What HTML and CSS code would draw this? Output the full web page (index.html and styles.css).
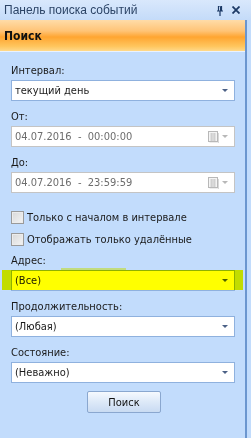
FILE: index.html
```html
<!DOCTYPE html>
<html lang="ru">
<head>
<meta charset="utf-8">
<link rel="stylesheet" href="styles.css">
</head>
<body>
<div class="window">
  <div class="titlebar">
    <span class="title">Панель поиска событий</span>
    <span class="tb-icons">
      <svg class="pin" width="8" height="10" viewBox="0 0 8 10"><path d="M2 0h4M2.5 0v5M5.5 0v5M1 5h6M4 5v5" stroke="#1d3a66" stroke-width="1.2" fill="none"/><rect x="4" y="0.5" width="1.5" height="4.5" fill="#1d3a66"/></svg>
      <svg class="close" width="8" height="8" viewBox="0 0 8 8"><path d="M0.5 0.5L7.5 7.5M7.5 0.5L0.5 7.5" stroke="#1d3a66" stroke-width="1.8"/></svg>
    </span>
  </div>
  <div class="panel">
    <div class="header">Поиск</div>
    <div class="content">
      <div class="group">
        <div class="label">Интервал:</div>
        <div class="field select"><span>текущий день</span><i class="arrow"></i></div>
      </div>
      <div class="group">
        <div class="label">От:</div>
        <div class="field date"><span>04.07.2016&nbsp; - &nbsp;00:00:00</span>
          <svg class="cal" width="11" height="12" viewBox="0 0 11 12"><rect x="0.5" y="0.5" width="9" height="10" fill="#f4f4f4" stroke="#b8b8b8"/><path d="M2 3h6M2 5h6M2 7h6M2 9h6M3.5 2v8M5 2v8M6.5 2v8" stroke="#d0d0d0" stroke-width="1"/><path d="M10.5 2v10H1.5" stroke="#d8d8d8" fill="none"/></svg>
          <i class="arrow grey"></i></div>
      </div>
      <div class="group">
        <div class="label">До:</div>
        <div class="field date"><span>04.07.2016&nbsp; - &nbsp;23:59:59</span>
          <svg class="cal" width="11" height="12" viewBox="0 0 11 12"><rect x="0.5" y="0.5" width="9" height="10" fill="#f4f4f4" stroke="#b8b8b8"/><path d="M2 3h6M2 5h6M2 7h6M2 9h6M3.5 2v8M5 2v8M6.5 2v8" stroke="#d0d0d0" stroke-width="1"/><path d="M10.5 2v10H1.5" stroke="#d8d8d8" fill="none"/></svg>
          <i class="arrow grey"></i></div>
      </div>
      <div class="checks">
        <label class="check"><span class="box"></span>Только с началом в интервале</label>
        <label class="check"><span class="box"></span>Отображать только удалённые</label>
      </div>
      <div class="group hl-group">
        <div class="label">Адрес:</div>
        <div class="field select"><span>(Все)</span><i class="arrow"></i></div>
        <div class="highlight"></div>
        <div class="highlight hl-top"></div>
      </div>
      <div class="group">
        <div class="label">Продолжительность:</div>
        <div class="field select"><span>(Любая)</span><i class="arrow"></i></div>
      </div>
      <div class="group">
        <div class="label">Состояние:</div>
        <div class="field select"><span>(Неважно)</span><i class="arrow"></i></div>
      </div>
      <div class="btn-row"><button class="btn">Поиск</button></div>
    </div>
  </div>
</div>
</body>
</html>
```
FILE: styles.css
```css
* { box-sizing: border-box; }
html, body { margin: 0; padding: 0; }
body {
  width: 251px;
  height: 438px;
  background: #c2dcfc;
  font-family: "DejaVu Sans Condensed", "DejaVu Sans", sans-serif;
  font-size: 11px;
  color: #1a1a1a;
  overflow: hidden;
}
.window { display: flex; flex-direction: column; height: 438px; }
.titlebar {
  height: 20px;
  display: flex;
  align-items: center;
  justify-content: space-between;
  padding: 0 11px 0 4px;
  background: linear-gradient(#d9e8fc, #c4dbf9);
  color: #2c4466;
  font-family: "Liberation Sans", Arial, sans-serif;
  font-size: 12px;
}
.tb-icons { display: flex; align-items: center; gap: 8px; }
.pin { margin-top: 1px; }
.panel {
  flex: 1;
  width: 247px;
  border-right: 2px solid #6b96cf;
  display: flex;
  flex-direction: column;
}
.header {
  height: 32px;
  display: flex;
  align-items: center;
  padding-left: 4px;
  font-weight: bold;
  font-size: 12px;
  color: #111;
  background: linear-gradient(#ffdca8 0%, #ffc477 35%, #ffa531 55%, #ffc65e 85%, #ffd98a 100%);
  border-bottom: 1px solid #e9f2ff;
}
.content {
  padding: 11px 0 0 11px;
  display: flex;
  flex-direction: column;
}
.group { display: flex; flex-direction: column; margin-bottom: 8px; position: relative; }
.label { height: 15px; line-height: 15px; margin-bottom: 2px; color: #1a1a1a; }
.field {
  width: 224px;
  height: 21px;
  background: #fff;
  border: 1px solid #8fb1de;
  display: flex;
  align-items: center;
  padding-left: 3px;
  position: relative;
}
.field span { flex: 1; white-space: nowrap; }
.arrow {
  width: 0; height: 0;
  border-left: 3px solid transparent;
  border-right: 3px solid transparent;
  border-top: 3px solid #4c6186;
  margin-right: 6px;
}
.arrow.grey { border-top-color: #b8b8b8; margin-left: 3px; }
.date { border-color: #c4c4c4; color: #6d6d6d; }
.cal { display: block; }
.checks { display: flex; flex-direction: column; gap: 6px; margin: 8px 0 6px; }
.check { display: flex; align-items: center; height: 16px; gap: 3px; }
.box {
  width: 13px; height: 13px;
  border: 1px solid #9a9a9a;
  background: linear-gradient(135deg, #d8d8d8, #f4f4f4);
  box-shadow: inset 0 0 0 1px #ececec;
}
.highlight {
  position: absolute;
  left: -9px;
  top: 17px;
  width: 241px;
  height: 20px;
  background: #ffff00;
  mix-blend-mode: multiply;
}
.hl-top { left: 50px; top: 15px; width: 65px; height: 3px; opacity: 0.5; }
.btn-row { display: flex; padding-left: 76px; }
.btn {
  width: 74px;
  height: 22px;
  border: 1px solid #8aa7cf;
  border-radius: 2px;
  background: linear-gradient(#f6f9fe, #dde9f8 50%, #c9dbf2);
  font-family: "DejaVu Sans Condensed", "DejaVu Sans", sans-serif;
  font-size: 11px;
  color: #111;
  padding: 0;
}
```
